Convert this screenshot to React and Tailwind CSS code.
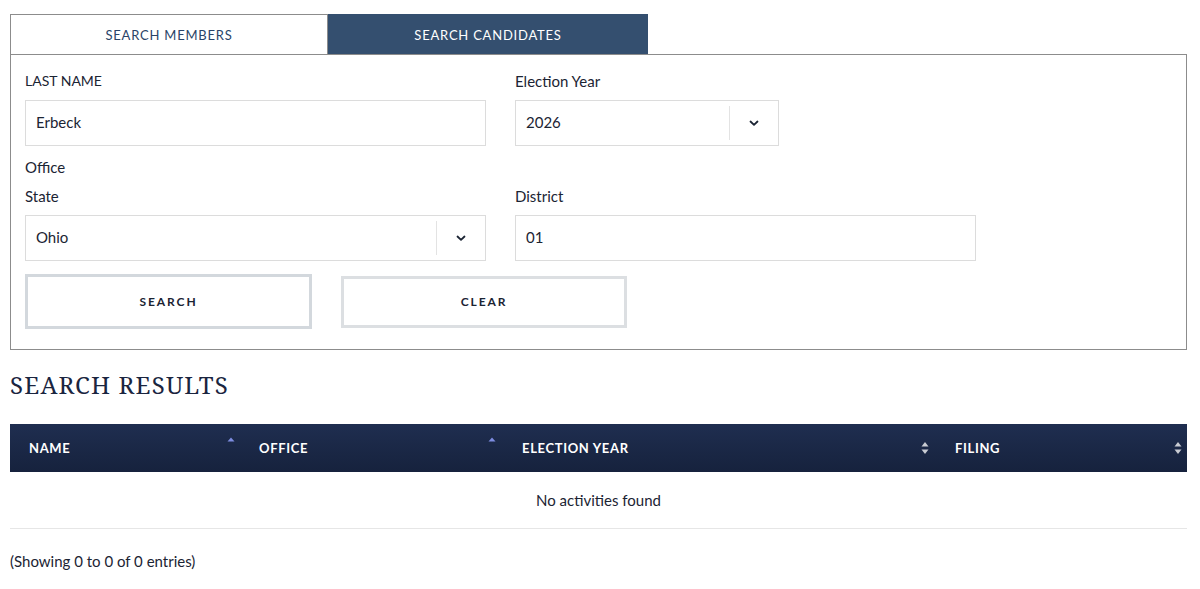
import React from "react";

const sans = { fontFamily: '"Source Sans Pro", "Lato", "Noto Sans", sans-serif' };

function Chevron() {
  return (
    <svg width="12" height="8" viewBox="0 0 12 8" className="text-[#1b2433]">
      <path d="M2.5 2.5 L6 5.8 L9.5 2.5" fill="none" stroke="currentColor" strokeWidth="1.8" strokeLinecap="round" strokeLinejoin="round" />
    </svg>
  );
}

function SortIcon({ mode }) {
  if (mode === "asc") {
    return (
      <svg width="8" height="12" viewBox="0 0 8 12">
        <path d="M0.5 4.5 L4 0.5 L7.5 4.5 Z" fill="#7d8ce0" />
      </svg>
    );
  }
  return (
    <svg width="8" height="14" viewBox="0 0 8 14">
      <path d="M0.5 5.5 L4 1 L7.5 5.5 Z" fill="#c9ccd3" />
      <path d="M0.5 8.5 L4 13 L7.5 8.5 Z" fill="#c9ccd3" />
    </svg>
  );
}

function Select({ value, width }) {
  return (
    <div className={`flex h-[46px] ${width} items-center border border-[#dcdcdc] bg-white`}>
      <span className="flex-1 pb-[1px] pl-[10px] text-[15px] text-[#1b2433]">{value}</span>
      <div className="flex h-[34px] w-[49px] items-center justify-center border-l border-[#e3e3e3]">
        <Chevron />
      </div>
    </div>
  );
}

function Input({ value, width }) {
  return (
    <div className={`flex h-[46px] ${width} items-center border border-[#dcdcdc] bg-white pb-[1px] pl-[10px] text-[15px] text-[#1b2433]`}>
      {value}
    </div>
  );
}

export default function App() {
  return (
    <div className="min-h-[589px] w-[1200px] bg-white px-[10px] pt-[14px]" style={sans}>
      <div className="w-[1177px]">
        <div className="flex">
          <div className="flex h-[40px] w-[318px] items-center justify-center border border-b-0 border-[#8c8c8c] bg-white pt-[3px] text-[13px] tracking-[0.06em] text-[#2a4468]">
            SEARCH MEMBERS
          </div>
          <div className="flex h-[40px] w-[320px] items-center justify-center bg-[#344f6f] pt-[3px] text-[13px] tracking-[0.06em] text-white">
            SEARCH CANDIDATES
          </div>
        </div>
        <div className="border border-[#8c8c8c] px-[14px] pb-[20px] pt-[16px]">
          <div className="flex gap-[29px]">
            <div className="flex flex-col">
              <div className="mb-[9px] text-[14px] leading-[20px] text-[#1b2433]">LAST NAME</div>
              <Input value="Erbeck" width="w-[461px]" />
            </div>
            <div className="flex flex-col">
              <div className="mb-[9px] text-[15px] leading-[20px] text-[#1b2433]">Election Year</div>
              <Select value="2026" width="w-[264px]" />
            </div>
          </div>
          <div className="mt-[11px] text-[15px] leading-[20px] text-[#1b2433]">Office</div>
          <div className="mt-[9px] flex gap-[29px]">
            <div className="flex flex-col">
              <div className="mb-[9px] text-[15px] leading-[20px] text-[#1b2433]">State</div>
              <Select value="Ohio" width="w-[461px]" />
            </div>
            <div className="flex flex-col">
              <div className="mb-[9px] text-[15px] leading-[20px] text-[#1b2433]">District</div>
              <Input value="01" width="w-[461px]" />
            </div>
          </div>
          <div className="mt-[13px] flex items-center gap-[29px]">
            <button className="flex h-[55px] w-[287px] items-center justify-center border-[3px] border-[#d3d8dd] bg-white text-[12px] font-bold tracking-[0.16em] text-[#1b2433]">
              SEARCH
            </button>
            <button className="flex h-[52px] w-[286px] items-center justify-center border-[3px] border-[#dcdfe2] bg-white text-[12px] font-bold tracking-[0.16em] text-[#1b2433]">
              CLEAR
            </button>
          </div>
        </div>

        <h2
          className="mt-[20px] text-[24px] leading-[30px] tracking-[0.05em] text-[#1a2540]"
          style={{ fontFamily: '"Noto Serif", "DejaVu Serif", "Liberation Serif", serif' }}
        >
          SEARCH RESULTS
        </h2>

        <div className="mt-[24px]">
          <div className="grid h-[48px] grid-cols-[230px_263px_433px_251px] bg-gradient-to-b from-[#1f2e50] to-[#16223d] text-[13px] font-bold tracking-[0.05em] text-white">
            {[
              ["NAME", "asc", "pr-[5px]"],
              ["OFFICE", "asc", "pr-[7px]"],
              ["ELECTION YEAR", "both", "pr-[7px]"],
              ["FILING", "both", "pr-[5px]"],
            ].map(([label, mode, pr]) => (
              <div key={label} className={`flex items-center justify-between pl-[19px] pt-[2px] ${pr}`}>
                <span>{label}</span>
                <span className={mode === "asc" ? "-mt-[12px]" : "-mt-[2px]"}>
                  <SortIcon mode={mode} />
                </span>
              </div>
            ))}
          </div>
          <div className="flex h-[57px] items-center justify-center border-b border-[#e6e6e6] text-[15px] text-[#1b2433]">
            No activities found
          </div>
        </div>
        <div className="mt-[21px] text-[15px] text-[#1b2433]">(Showing 0 to 0 of 0 entries)</div>
      </div>
    </div>
  );
}
